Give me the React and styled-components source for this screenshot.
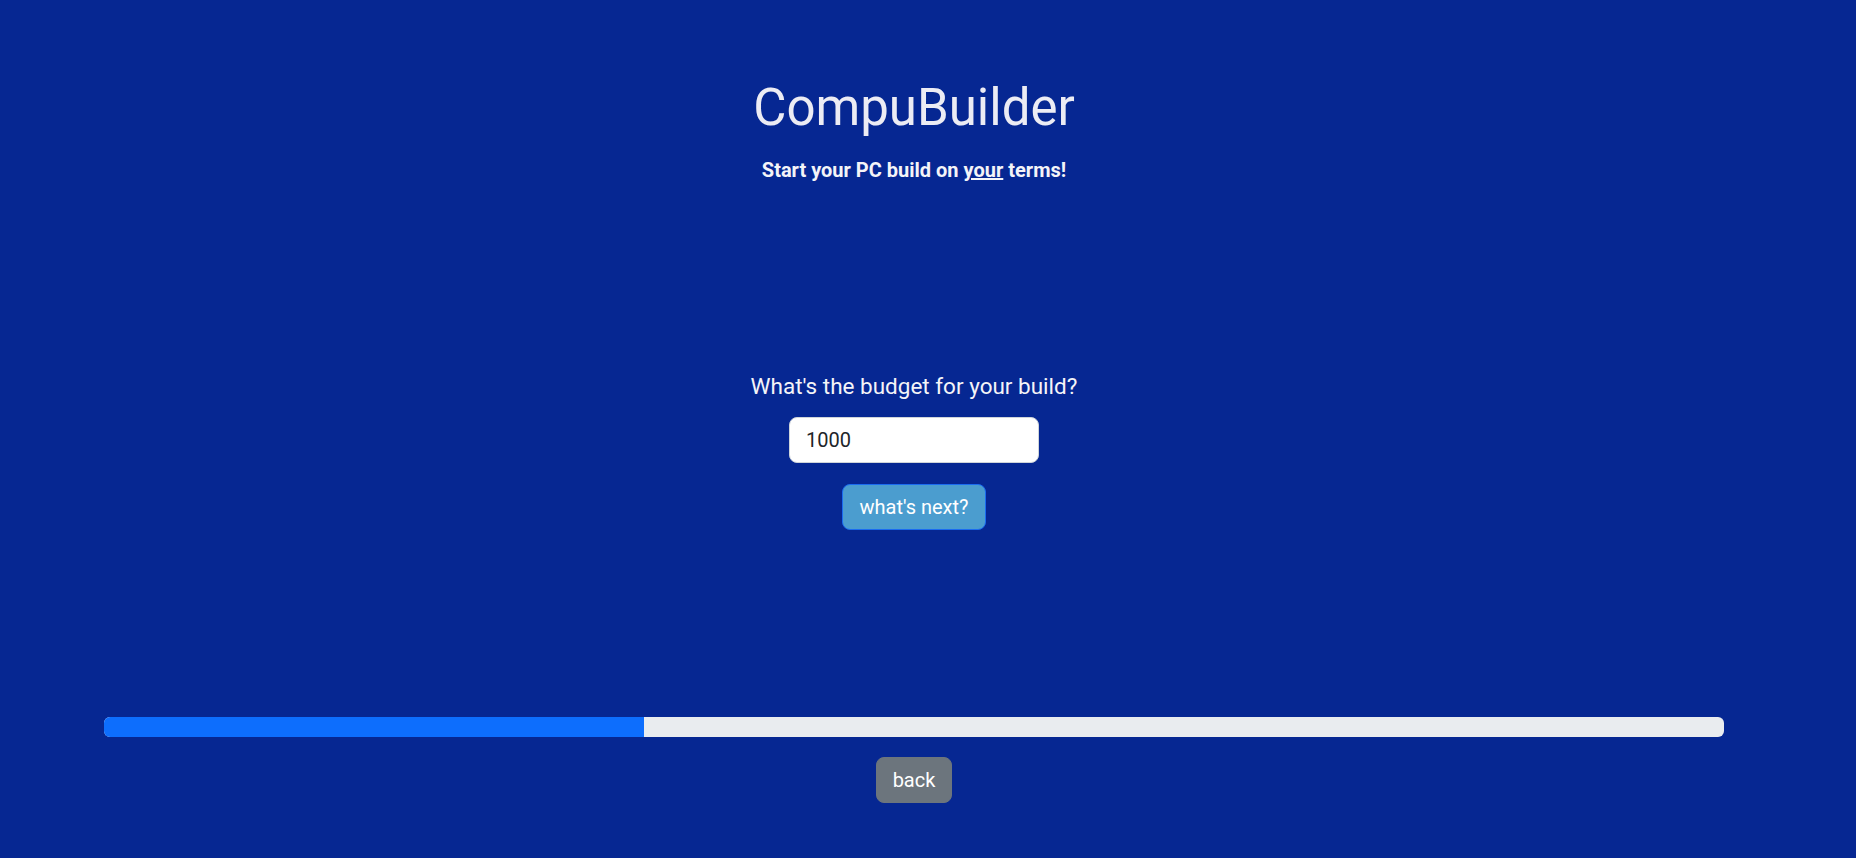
import React, { useState } from "react";
import styled, { createGlobalStyle } from "styled-components";

const GlobalStyle = createGlobalStyle`
  * {
    box-sizing: border-box;
  }

  body {
    margin: 0;
    background-color: #062792;
    font-family: Roboto, "Liberation Sans", Arial, sans-serif;
    color: #f2f2f7;
  }
`;

export default function App() {
  // budget typed by the user
  const [budget, setBudget] = useState("1000");
  const progress = 100 / 3;

  return (
    <Page>
      <GlobalStyle />
      <Header>
        <Title>CompuBuilder</Title>
        <Tagline>
          Start your PC build on <u>your</u> terms!
        </Tagline>
      </Header>

      <Question>
        <Label htmlFor="budget">What's the budget for your build?</Label>
        <BudgetInput
          id="budget"
          value={budget}
          onChange={(e) => setBudget(e.target.value)}
        />
        <Button $variant="next">what's next?</Button>
      </Question>

      <Footer>
        <Progress>
          <ProgressFill style={{ width: `${progress}%` }} />
        </Progress>
        <Button $variant="back">back</Button>
      </Footer>
    </Page>
  );
}

const Page = styled.div`
  width: 1828px;
  min-height: 858px;
  display: flex;
  flex-direction: column;
  align-items: center;
`;

const Header = styled.header`
  padding-top: 77px;
  display: flex;
  flex-direction: column;
  align-items: center;
`;

const Title = styled.h1`
  margin: 0;
  font-size: 51px;
  font-weight: 400;
  line-height: 1.2;
  color: #ececf4;
`;

const Tagline = styled.p`
  margin: 17px 0 0;
  font-size: 20px;
  font-weight: 700;
  line-height: 1.5;
  color: #f4f4f8;
`;

const Question = styled.div`
  margin-top: 185px;
  display: flex;
  flex-direction: column;
  align-items: center;
`;

const Label = styled.label`
  font-size: 22.5px;
  line-height: 1.5;
  color: #f4f4f8;
`;

const BudgetInput = styled.input`
  margin-top: 13px;
  width: 250px;
  height: 46px;
  padding: 0 16px;
  font-family: inherit;
  font-size: 20px;
  color: #212529;
  background: #fff;
  border: 1px solid #ced4da;
  border-radius: 8px;
  outline: none;
`;

const Button = styled.button`
  margin-top: ${(p) => (p.$variant === "next" ? "21px" : "20px")};
  height: 46px;
  padding: 0 16px;
  font-family: inherit;
  font-size: 20px;
  line-height: 1;
  color: #fff;
  background-color: ${(p) => (p.$variant === "next" ? "#4b9dcf" : "#6c757d")};
  border: 1px solid ${(p) => (p.$variant === "next" ? "#1a6cf0" : "#6c757d")};
  border-radius: 8px;
  cursor: pointer;
`;

const Footer = styled.div`
  margin-top: 187px;
  width: 100%;
  padding: 0 104px;
  display: flex;
  flex-direction: column;
  align-items: center;
`;

const Progress = styled.div`
  width: 100%;
  height: 20px;
  background-color: #e9ecef;
  border-radius: 6px;
  overflow: hidden;
  display: flex;
`;

const ProgressFill = styled.div`
  height: 100%;
  background-color: #0d6efd;
`;
